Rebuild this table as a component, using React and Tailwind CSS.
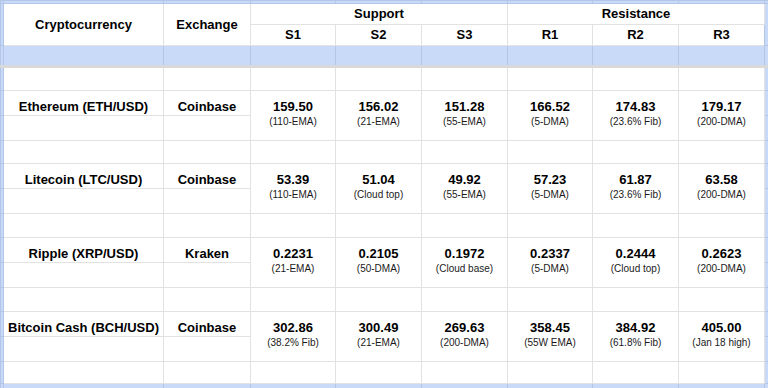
import React from 'react';

const coins = [
  {
    name: 'Ethereum (ETH/USD)',
    exchange: 'Coinbase',
    levels: [
      ['159.50', '(110-EMA)'],
      ['156.02', '(21-EMA)'],
      ['151.28', '(55-EMA)'],
      ['166.52', '(5-DMA)'],
      ['174.83', '(23.6% Fib)'],
      ['179.17', '(200-DMA)'],
    ],
  },
  {
    name: 'Litecoin (LTC/USD)',
    exchange: 'Coinbase',
    levels: [
      ['53.39', '(110-EMA)'],
      ['51.04', '(Cloud top)'],
      ['49.92', '(55-EMA)'],
      ['57.23', '(5-DMA)'],
      ['61.87', '(23.6% Fib)'],
      ['63.58', '(200-DMA)'],
    ],
  },
  {
    name: 'Ripple (XRP/USD)',
    exchange: 'Kraken',
    levels: [
      ['0.2231', '(21-EMA)'],
      ['0.2105', '(50-DMA)'],
      ['0.1972', '(Cloud base)'],
      ['0.2337', '(5-DMA)'],
      ['0.2444', '(Cloud top)'],
      ['0.2623', '(200-DMA)'],
    ],
  },
  {
    name: 'Bitcoin Cash (BCH/USD)',
    exchange: 'Coinbase',
    levels: [
      ['302.86', '(38.2% Fib)'],
      ['300.49', '(21-EMA)'],
      ['269.63', '(200-DMA)'],
      ['358.45', '(55W EMA)'],
      ['384.92', '(61.8% Fib)'],
      ['405.00', '(Jan 18 high)'],
    ],
  },
];

const blue = 'bg-[#c9daf8] border border-[#b3c6e7] p-0';
const cell = 'border border-[#e2e2e2] p-0 text-center';

function BlueRow({ h }) {
  return (
    <tr className={h}>
      {Array.from({ length: 10 }).map((_, i) => (
        <td key={i} className={blue} />
      ))}
    </tr>
  );
}

function Spacer({ h }) {
  return (
    <tr className={h}>
      <td className={blue} />
      {Array.from({ length: 8 }).map((_, i) => (
        <td key={i} className={cell} />
      ))}
      <td className={blue} />
    </tr>
  );
}

export default function App() {
  return (
    <div className="w-[768px] h-[388px] overflow-hidden bg-[#c9daf8] font-['Liberation_Sans',Arial,sans-serif] text-black">
      <table className="table-fixed border-collapse w-[768px] bg-white">
        <colgroup>
          <col className="w-[3px]" />
          <col className="w-[160px]" />
          <col className="w-[87px]" />
          <col className="w-[85px]" />
          <col className="w-[86px]" />
          <col className="w-[86px]" />
          <col className="w-[85px]" />
          <col className="w-[86px]" />
          <col className="w-[86px]" />
          <col className="w-[4px]" />
        </colgroup>
        <tbody>
          <BlueRow h="h-[3px]" />
          <tr className="h-[21px]">
            <td rowSpan={2} className={blue} />
            <td rowSpan={2} className={`${cell} text-[13px] font-bold align-middle`}>Cryptocurrency</td>
            <td rowSpan={2} className={`${cell} text-[13px] font-bold align-middle`}>Exchange</td>
            <td colSpan={3} className={`${cell} text-[13px] font-bold align-middle`}>Support</td>
            <td colSpan={3} className={`${cell} text-[13px] font-bold align-middle`}>Resistance</td>
            <td rowSpan={2} className={blue} />
          </tr>
          <tr className="h-[20px]">
            {['S1', 'S2', 'S3', 'R1', 'R2', 'R3'].map((s) => (
              <td key={s} className={`${cell} text-[13px] font-bold align-middle`}>{s}</td>
            ))}
          </tr>
          <tr className="h-[21px]">
            {Array.from({ length: 10 }).map((_, i) => (
              <td key={i} className="bg-[#c9daf8] border border-[#b3c6e7] border-b-[3px] border-b-[#d9d9d9] p-0" />
            ))}
          </tr>

          {coins.map((c, idx) => (
            <React.Fragment key={c.name}>
              <Spacer h={idx === 1 ? 'h-[23px]' : 'h-[24px]'} />
              <tr className="h-[25px]">
                <td className={blue} />
                <td className={`${cell} text-[13px] font-bold leading-[15px] align-top pt-[8px]`}>{c.name}</td>
                <td className={`${cell} text-[13px] font-bold leading-[15px] align-top pt-[8px]`}>{c.exchange}</td>
                {c.levels.map(([v, note], i) => (
                  <td key={i} rowSpan={2} className={`${cell} align-middle pb-[2px]`}>
                    <div className="text-[13px] font-bold leading-4">{v}</div>
                    <div className="text-[10px] leading-[14px] text-[#1a1a1a]">{note}</div>
                  </td>
                ))}
                <td className={blue} />
              </tr>
              <tr className="h-[25px]">
                <td className={blue} />
                <td className={cell} />
                <td className={cell} />
                <td className={blue} />
              </tr>
            </React.Fragment>
          ))}

          <Spacer h="h-[22px]" />
          <BlueRow h="h-[12px]" />
        </tbody>
      </table>
    </div>
  );
}
